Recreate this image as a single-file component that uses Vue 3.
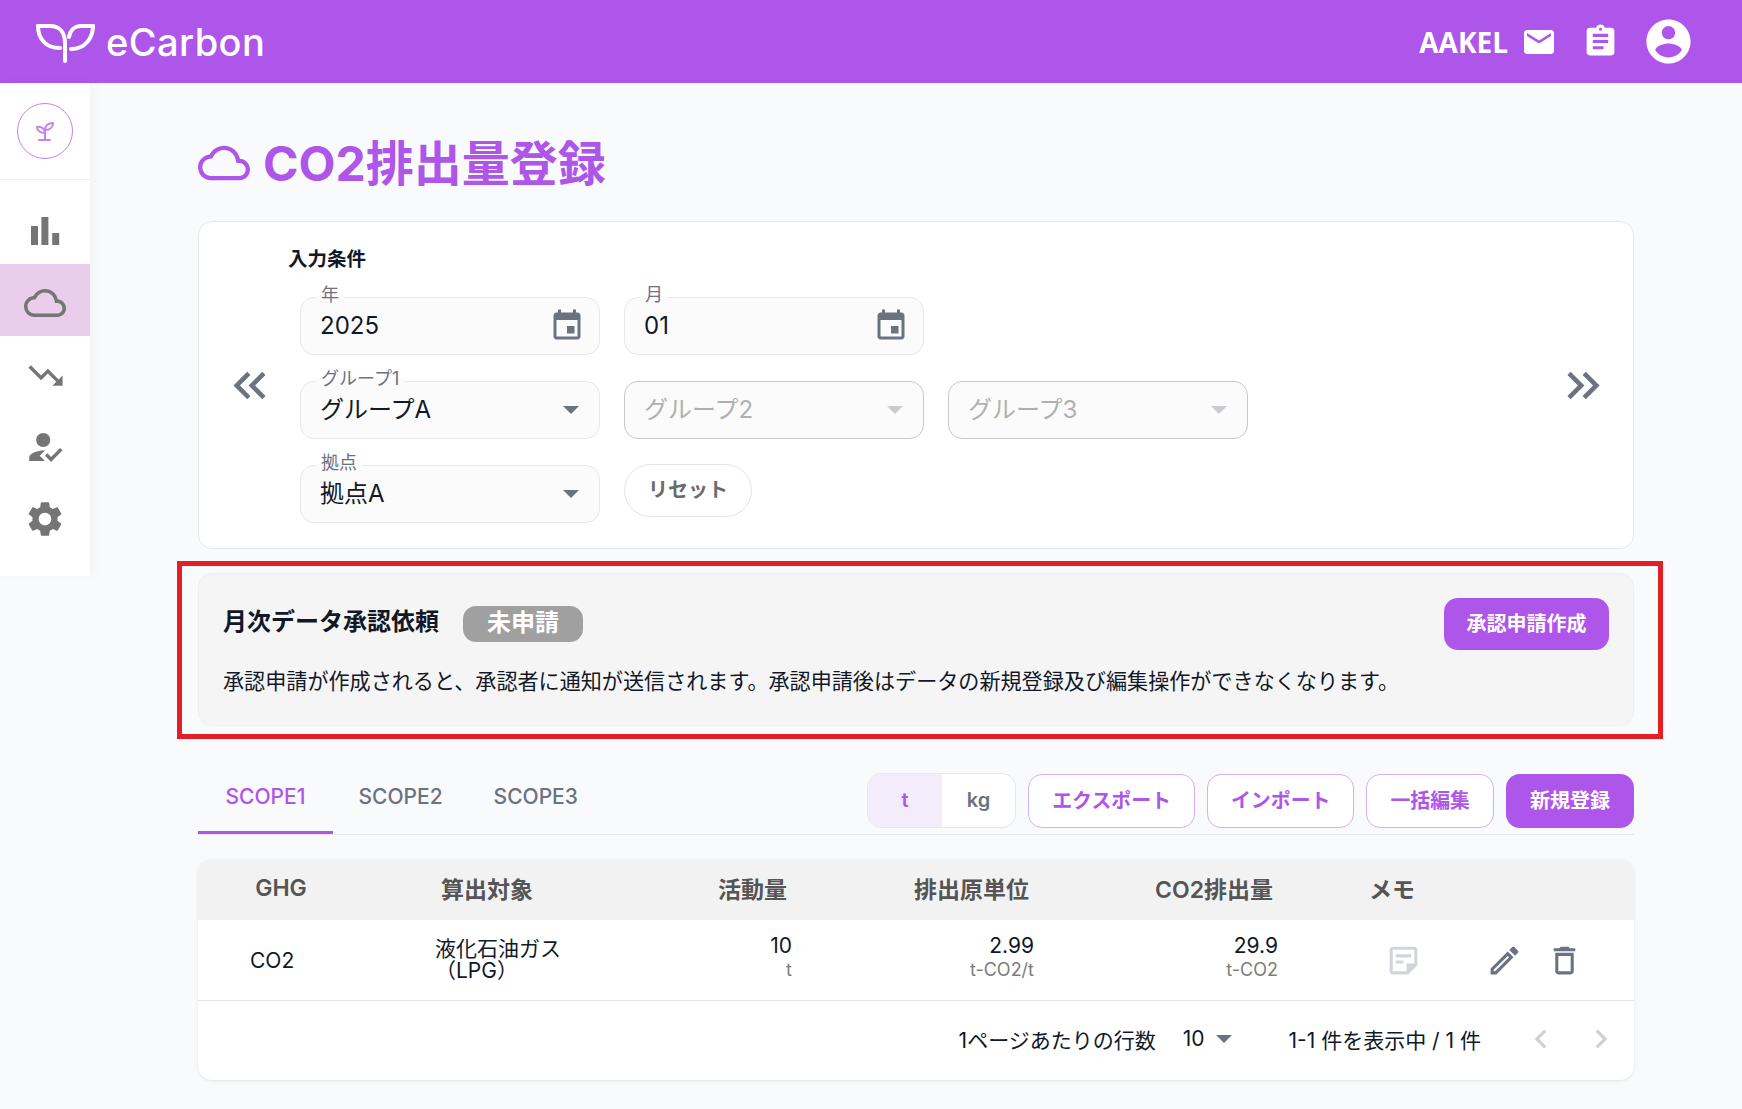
<template>
  <div class="page">
    <header class="topbar">
      <div class="brand">
        <svg class="brand-mark" viewBox="0 0 61 40" fill="none" stroke="#fff" stroke-width="4" stroke-linecap="round" stroke-linejoin="round">
          <path d="M3 3H15C25 3 30 10 30 20V38" />
          <path d="M3 3C3 15 10 25 25 25" />
          <path d="M58 3H46C39 3 35 8 34 14" />
          <path d="M58 3C58 15 50 26 36 26" />
        </svg>
        <span class="brand-name">eCarbon</span>
      </div>
      <div class="top-right">
        <span class="user">AAKEL</span>
        <svg class="ic-mail" viewBox="0 0 24 24"><path :d="icons.mail" /></svg>
        <svg class="ic-clip" viewBox="0 0 24 24"><path :d="icons.assignment" /></svg>
        <svg class="ic-account" viewBox="0 0 24 24"><path :d="icons.account" /></svg>
      </div>
    </header>

    <div class="body">
      <aside class="sidebar">
        <div class="side-top">
          <div class="sprout">
            <svg viewBox="0 0 20 20" fill="none" stroke="#c480ec" stroke-width="2" stroke-linecap="round" stroke-linejoin="round">
              <path d="M10 18V9" />
              <path d="M4 19H15" />
              <path d="M10 12C6 12 2 10 2 6C6 5 10 8 10 12Z" />
              <path d="M10 9C10 5 13 2 18 2C18 6 15 9 10 9Z" />
            </svg>
          </div>
        </div>
        <nav class="side-nav">
          <div v-for="item in navItems" :key="item.name" class="nav-item" :class="{ active: item.active }">
            <svg :width="item.size" :height="item.size" viewBox="0 0 24 24"><path :d="item.d" /></svg>
          </div>
        </nav>
      </aside>

      <main class="content">
        <div class="title-row">
          <svg class="title-icon" viewBox="0 0 24 24"><path :d="icons.cloud" /></svg>
          <h1>CO2排出量登録</h1>
        </div>

        <section class="filter-card">
          <svg class="page-arrow" viewBox="0 0 24 24"><path d="M17.59 18L19 16.59 14.42 12 19 7.41 17.59 6l-6 6z" /><path d="M11 18l1.41-1.41L7.83 12l4.58-4.59L11 6l-6 6z" /></svg>
          <div class="filter-body">
            <div class="filter-title">入力条件</div>
            <div class="filter-rows">
              <div class="filter-row">
                <div v-for="f in dateFields" :key="f.label" class="field">
                  <label>{{ f.label }}</label>
                  <span class="val">{{ f.value }}</span>
                  <svg class="cal" viewBox="0 0 24 24"><path :d="icons.event" /></svg>
                </div>
              </div>
              <div class="filter-row">
                <div class="field">
                  <label>グループ1</label>
                  <span class="val">グループA</span>
                  <span class="caret"></span>
                </div>
                <div v-for="g in ['グループ2', 'グループ3']" :key="g" class="field disabled">
                  <span class="val">{{ g }}</span>
                  <span class="caret"></span>
                </div>
              </div>
              <div class="filter-row">
                <div class="field">
                  <label>拠点</label>
                  <span class="val">拠点A</span>
                  <span class="caret"></span>
                </div>
                <button class="reset">リセット</button>
              </div>
            </div>
          </div>
          <svg class="page-arrow" viewBox="0 0 24 24"><path d="M6.41 6L5 7.41 9.58 12 5 16.59 6.41 18l6-6z" /><path d="M13 6l-1.41 1.41L16.17 12l-4.58 4.59L13 18l6-6z" /></svg>
        </section>

        <section class="approval">
          <div class="approval-head">
            <div class="approval-left">
              <h2>月次データ承認依頼</h2>
              <span class="badge">未申請</span>
            </div>
            <button class="btn-primary approve">承認申請作成</button>
          </div>
          <p>承認申請が作成されると、承認者に通知が送信されます。承認申請後はデータの新規登録及び編集操作ができなくなります。</p>
          <div class="highlight"></div>
        </section>

        <div class="tabs-row">
          <div class="tabs">
            <div v-for="(t, i) in tabs" :key="t" class="tab" :class="{ active: i === 0 }">{{ t }}</div>
          </div>
          <div class="actions">
            <div class="unit">
              <span class="on">t</span>
              <span>kg</span>
            </div>
            <button v-for="b in outlineButtons" :key="b" class="btn-outline">{{ b }}</button>
            <button class="btn-primary add">新規登録</button>
          </div>
        </div>

        <section class="table">
          <div class="grid thead">
            <div class="th center">GHG</div>
            <div class="th center">算出対象</div>
            <div class="th right">活動量</div>
            <div class="th right">排出原単位</div>
            <div class="th right">CO2排出量</div>
            <div class="th center">メモ</div>
            <div></div>
          </div>
          <div class="grid trow">
            <div class="td ghg">CO2</div>
            <div class="td target">液化石油ガス<br />（LPG）</div>
            <div v-for="n in amounts" :key="n.unit" class="td amount">
              <span class="amount-val">{{ n.value }}</span>
              <span class="amount-unit">{{ n.unit }}</span>
            </div>
            <div class="td memo">
              <svg viewBox="0 0 24 24"><path :d="icons.note" /></svg>
            </div>
            <div class="td row-actions">
              <svg viewBox="0 0 24 24"><path :d="icons.edit" /></svg>
              <svg viewBox="0 0 24 24"><path :d="icons.trash" /></svg>
            </div>
          </div>
          <div class="tfoot">
            <span>1ページあたりの行数</span>
            <span class="per-page">10</span>
            <span class="caret small"></span>
            <span class="range">1-1 件を表示中 / 1 件</span>
            <svg class="pg first" viewBox="0 0 24 24"><path d="M15.41 7.41L14 6l-6 6 6 6 1.41-1.41L10.83 12z" /></svg>
            <svg class="pg" viewBox="0 0 24 24"><path d="M10 6L8.59 7.41 13.17 12l-4.58 4.59L10 18l6-6z" /></svg>
          </div>
        </section>
      </main>
    </div>
  </div>
</template>

<script setup>
const icons = {
  mail: "M20 4H4c-1.1 0-1.99.9-1.99 2L2 18c0 1.1.9 2 2 2h16c1.1 0 2-.9 2-2V6c0-1.1-.9-2-2-2zm0 4l-8 5-8-5V6l8 5 8-5v2z",
  assignment: "M19 3h-4.18C14.4 1.84 13.3 1 12 1c-1.3 0-2.4.84-2.82 2H5c-1.1 0-2 .9-2 2v14c0 1.1.9 2 2 2h14c1.1 0 2-.9 2-2V5c0-1.1-.9-2-2-2zm-7 0c.55 0 1 .45 1 1s-.45 1-1 1-1-.45-1-1 .45-1 1-1zm2 14H7v-2h7v2zm3-4H7v-2h10v2zm0-4H7V7h10v2z",
  account: "M12 2C6.48 2 2 6.48 2 12s4.48 10 10 10 10-4.48 10-10S17.52 2 12 2zm0 3c1.66 0 3 1.34 3 3s-1.34 3-3 3-3-1.34-3-3 1.34-3 3-3zm0 14.2c-2.5 0-4.71-1.28-6-3.22.03-1.99 4-3.08 6-3.08 1.99 0 5.97 1.09 6 3.08-1.29 1.94-3.5 3.22-6 3.22z",
  cloud: "M19.35 10.04C18.67 6.59 15.64 4 12 4 9.11 4 6.6 5.64 5.35 8.04 2.34 8.36 0 10.91 0 14c0 3.31 2.69 6 6 6h13c2.76 0 5-2.24 5-5 0-2.64-2.05-4.78-4.65-4.96zM19 18H6c-2.21 0-4-1.79-4-4 0-2.05 1.53-3.76 3.56-3.97l1.07-.11.5-.95C8.08 7.14 9.94 6 12 6c2.62 0 4.88 1.86 5.39 4.43l.3 1.5 1.53.11c1.56.1 2.78 1.41 2.78 2.96 0 1.65-1.35 3-3 3z",
  event: "M17 12h-5v5h5v-5zM16 1v2H8V1H6v2H5c-1.11 0-1.99.9-1.99 2L3 19c0 1.1.89 2 2 2h14c1.1 0 2-.9 2-2V5c0-1.1-.9-2-2-2h-1V1h-2zm3 18H5V8h14v11z",
  note: "M19 5v9h-5v5H5V5h14m0-2H5c-1.1 0-2 .9-2 2v14c0 1.1.9 2 2 2h10l6-6V5c0-1.1-.9-2-2-2zm-7 11H7v-2h5v2zm5-4H7V8h10v2z",
  edit: "M14.06 9.02l.92.92L5.92 19H5v-.92l9.06-9.06M17.66 3c-.25 0-.51.1-.7.29l-1.83 1.83 3.75 3.75 1.83-1.83c.39-.39.39-1.02 0-1.41l-2.34-2.34c-.2-.2-.45-.29-.71-.29zm-3.6 3.19L3 17.25V21h3.75L17.81 9.94l-3.75-3.75z",
  trash: "M6 19c0 1.1.9 2 2 2h8c1.1 0 2-.9 2-2V7H6v12zM8 9h8v10H8V9zm7.5-5l-1-1h-5l-1 1H5v2h14V4h-3.5z",
};

const navItems = [
  { name: "chart", size: 48, d: "M5 9.5h3.5V19H5zM10.2 5h3.5v14h-3.5zM15.6 13h3.5v6h-3.5z" },
  { name: "cloud", size: 42, d: icons.cloud, active: true },
  { name: "trend", size: 41, d: "M16 18l2.29-2.29-4.88-4.88-4 4L2 7.41 3.41 6l6 6 4-4 6.3 6.29L22 12v6z" },
  { name: "approve", size: 42, d: "M9 17l3-2.94c-.39-.04-.68-.06-1-.06-2.67 0-8 1.34-8 4v2h9l-3-3zm2-5c2.21 0 4-1.79 4-4s-1.79-4-4-4-4 1.79-4 4 1.79 4 4 4M15.47 20.5L12 17l1.4-1.41 2.07 2.08 5.13-5.17 1.4 1.41z" },
  { name: "settings", size: 42, d: "M19.14 12.94c.04-.3.06-.61.06-.94 0-.32-.02-.64-.07-.94l2.03-1.58c.18-.14.23-.41.12-.61l-1.92-3.32c-.12-.22-.37-.29-.59-.22l-2.39.96c-.5-.38-1.03-.7-1.62-.94l-.36-2.54c-.04-.24-.24-.41-.48-.41h-3.84c-.24 0-.43.17-.47.41l-.36 2.54c-.59.24-1.13.57-1.62.94l-2.39-.96c-.22-.08-.47 0-.59.22L2.74 8.87c-.12.21-.08.47.12.61l2.03 1.58c-.05.3-.09.63-.09.94s.02.64.07.94l-2.03 1.58c-.18.14-.23.41-.12.61l1.92 3.32c.12.22.37.29.59.22l2.39-.96c.5.38 1.03.7 1.62.94l.36 2.54c.05.24.24.41.48.41h3.84c.24 0 .44-.17.47-.41l.36-2.54c.59-.24 1.13-.56 1.62-.94l2.39.96c.22.08.47 0 .59-.22l1.92-3.32c.12-.22.07-.47-.12-.61l-2.01-1.58zM12 15.6c-1.98 0-3.6-1.62-3.6-3.6s1.62-3.6 3.6-3.6 3.6 1.62 3.6 3.6-1.62 3.6-3.6 3.6z" },
];

const dateFields = [
  { label: "年", value: "2025" },
  { label: "月", value: "01" },
];
const tabs = ["SCOPE1", "SCOPE2", "SCOPE3"];
const outlineButtons = ["エクスポート", "インポート", "一括編集"];
const amounts = [
  { value: "10", unit: "t" },
  { value: "2.99", unit: "t-CO2/t" },
  { value: "29.9", unit: "t-CO2" },
];
</script>

<style>
html,
body {
  background: #f9fafb;
}
</style>

<style scoped>
.page {
  min-height: 1109px;
  background: #f9fafb;
  font-family: Inter, "Noto Sans CJK JP", sans-serif;
  color: #111827;
}
button {
  font-family: inherit;
  cursor: pointer;
}

/* header */
.topbar {
  height: 83px;
  background: #ae56ea;
  display: flex;
  align-items: center;
  justify-content: space-between;
  padding: 0 47px 0 35px;
}
.brand {
  display: flex;
  align-items: center;
  gap: 10px;
}
.brand-mark {
  width: 61px;
  height: 40px;
  margin-top: 2px;
}
.brand-name {
  color: #fff;
  font-size: 38px;
  font-weight: 500;
  line-height: 40px;
  letter-spacing: 0.4px;
  margin-top: 1px;
}
.top-right {
  display: flex;
  align-items: center;
  fill: #fff;
}
.user {
  color: #fff;
  font-family: "Open Sans", sans-serif;
  font-weight: 700;
  font-size: 28px;
  margin-right: 13px;
}
.ic-mail {
  width: 36px;
  height: 36px;
}
.ic-clip {
  width: 37px;
  height: 37px;
  margin-left: 25px;
}
.ic-account {
  width: 53px;
  height: 53px;
  margin-left: 23px;
}

/* sidebar */
.body {
  display: flex;
  align-items: flex-start;
}
.sidebar {
  width: 90px;
  height: 493px;
  flex-shrink: 0;
  background: #fff;
  box-shadow: 4px 0 10px rgba(0, 0, 0, 0.03);
}
.side-top {
  height: 97px;
  border-bottom: 1px solid #eeeeee;
  padding-top: 20px;
  box-sizing: border-box;
}
.sprout {
  width: 56px;
  height: 56px;
  margin: 0 auto;
  border: 1px solid #c480ec;
  border-radius: 50%;
  box-sizing: border-box;
  display: flex;
  align-items: center;
  justify-content: center;
}
.sprout svg {
  width: 20px;
  height: 20px;
}
.side-nav {
  margin-top: 12px;
}
.nav-item {
  height: 72px;
  padding-top: 6px;
  box-sizing: border-box;
  display: flex;
  align-items: center;
  justify-content: center;
  fill: #757575;
}
.nav-item.active {
  background: #e9cdea;
}

/* main */
.content {
  flex: 1;
  padding: 52px 108px 0;
  min-width: 0;
}
.title-row {
  display: flex;
  align-items: center;
  height: 56px;
  gap: 13px;
  fill: #ae56ea;
}
.title-icon {
  width: 52px;
  height: 52px;
}
h1 {
  margin: 2px 0 0;
  font-size: 48px;
  font-weight: 700;
  line-height: 56px;
  color: #ae56ea;
}

.filter-card {
  margin-top: 30px;
  height: 328px;
  box-sizing: border-box;
  background: #fff;
  border: 1px solid #e5e7eb;
  border-radius: 14px;
  display: flex;
  align-items: center;
  padding: 0 22px 0 23px;
}
.page-arrow {
  width: 55px;
  height: 55px;
  flex-shrink: 0;
  fill: #6b7280;
}
.filter-body {
  flex: 1;
  margin-left: 11px;
  align-self: stretch;
  padding-top: 23px;
}
.filter-title {
  font-size: 19.5px;
  font-weight: 700;
  line-height: 28px;
}
.filter-rows {
  margin: 24px 0 0 12px;
  display: flex;
  flex-direction: column;
  gap: 26px;
}
.filter-row {
  display: flex;
  gap: 24px;
  align-items: flex-start;
}
.field {
  position: relative;
  width: 300px;
  height: 58px;
  box-sizing: border-box;
  background: #fbfbfb;
  border: 1px solid #e8e8e8;
  border-radius: 14px;
  display: flex;
  align-items: center;
  justify-content: space-between;
  padding: 0 16px 0 19px;
}
.field label {
  position: absolute;
  left: 15px;
  top: -14px;
  padding: 0 5px;
  font-size: 18px;
  line-height: 22px;
  color: #6b7280;
  background: linear-gradient(#fff 50%, #fbfbfb 50%);
}
.val {
  font-size: 24px;
  line-height: 32px;
}
.cal {
  width: 36px;
  height: 36px;
  margin-right: -2px;
  fill: #6b7280;
}
.caret {
  width: 0;
  height: 0;
  border-left: 8.5px solid transparent;
  border-right: 8.5px solid transparent;
  border-top: 8px solid #6b7280;
  margin-right: 4px;
}
.field.disabled {
  border-color: #c9c9c9;
}
.field.disabled .val {
  color: #b0b0b0;
}
.field.disabled .caret {
  border-top-color: #c9cbd0;
}
.reset {
  width: 128px;
  height: 53px;
  margin-top: -1px;
  border: 1px solid #e3e3e3;
  border-radius: 27px;
  background: #fff;
  color: #6b6b6b;
  font-size: 20px;
  font-weight: 700;
  padding: 0 0 4px;
}

/* approval */
.approval {
  position: relative;
  margin-top: 24px;
  height: 153px;
  box-sizing: border-box;
  background: #f5f5f5;
  border: 1px solid #efefef;
  border-radius: 14px;
  padding: 24px 24px 0;
}
.approval-head {
  display: flex;
  align-items: center;
  justify-content: space-between;
  height: 52px;
}
.approval-left {
  display: flex;
  align-items: center;
  gap: 24px;
}
h2 {
  margin: 0 0 4px;
  font-size: 24px;
  font-weight: 700;
  line-height: 36px;
}
.badge {
  width: 120px;
  height: 36px;
  border-radius: 13px;
  background: #a0a0a0;
  color: #fff;
  font-size: 24px;
  font-weight: 700;
  line-height: 34px;
  text-align: center;
}
.btn-primary {
  border: none;
  background: #ae56ea;
  color: #fff;
  font-size: 20px;
  font-weight: 700;
  border-radius: 14px;
  padding: 0 0 4px;
}
.approve {
  width: 165px;
  height: 52px;
}
.approval p {
  margin: 17px 0 0;
  font-size: 21.1px;
  line-height: 30px;
}
.highlight {
  position: absolute;
  top: -13px;
  left: -22px;
  right: -30px;
  bottom: -14px;
  border: 5px solid #e31e25;
  pointer-events: none;
}

/* tabs */
.tabs-row {
  margin-top: 47px;
  height: 62px;
  box-sizing: border-box;
  border-bottom: 1px solid #e5e7eb;
  display: flex;
  justify-content: space-between;
  align-items: flex-start;
}
.tabs {
  display: flex;
}
.tab {
  height: 61px;
  box-sizing: border-box;
  padding: 10px 25.5px 0;
  font-size: 21px;
  font-weight: 500;
  line-height: 28px;
  color: #6b7280;
}
.tab.active {
  padding: 10px 27.5px 0;
  color: #ae56ea;
  border-bottom: 3px solid #ae56ea;
}
.actions {
  display: flex;
  gap: 12px;
  padding-top: 1px;
}
.unit {
  display: flex;
  width: 149px;
  height: 55px;
  margin-top: -1px;
  box-sizing: border-box;
  border: 1px solid #e5e7eb;
  border-radius: 14px;
  overflow: hidden;
  background: #fff;
}
.unit span {
  flex: 1;
  display: flex;
  align-items: center;
  justify-content: center;
  padding-bottom: 2px;
  font-size: 20px;
  font-weight: 600;
  color: #6b7280;
}
.unit .on {
  background: #f3ecfa;
  color: #ae56ea;
}
.btn-outline {
  height: 54px;
  padding: 0 23px 4px;
  box-sizing: border-box;
  background: #fff;
  border: 1px solid #d6b0f2;
  border-radius: 14px;
  color: #ae56ea;
  font-size: 19.9px;
  font-weight: 700;
}
.add {
  width: 128px;
  height: 54px;
}

/* table */
.table {
  margin-top: 24px;
  background: #fff;
  border-radius: 14px;
  overflow: hidden;
  box-shadow: 0 1px 3px rgba(0, 0, 0, 0.1);
}
.grid {
  display: grid;
  grid-template-columns: 166px 246px 202px 242px 244px 188px 148px;
  align-items: center;
}
.thead {
  height: 61px;
  padding-bottom: 4px;
  box-sizing: border-box;
  background: #f2f2f2;
}
.th {
  font-size: 23px;
  font-weight: 600;
  color: #555555;
}
.th.center {
  text-align: center;
}
.th.right {
  text-align: right;
  padding-right: 25px;
}
.trow {
  height: 81px;
  border-bottom: 1px solid #e5e7eb;
  box-sizing: border-box;
}
.td {
  font-size: 21px;
}
.ghg {
  padding-left: 52px;
}
.target {
  padding-left: 71px;
  line-height: 22px;
}
.amount {
  display: flex;
  flex-direction: column;
  align-items: flex-end;
  padding-right: 20px;
  margin-bottom: 6px;
}
.amount-val {
  line-height: 26px;
}
.amount-unit {
  font-size: 18px;
  line-height: 22px;
  color: #7c7c7c;
}
.memo {
  padding-left: 87px;
  display: flex;
  fill: #d1d5db;
}
.memo svg,
.row-actions svg {
  width: 37px;
  height: 37px;
}
.row-actions {
  display: flex;
  gap: 22px;
  fill: #6b7280;
}
.row-actions svg:last-child {
  margin-left: 1px;
}
.tfoot {
  height: 79px;
  display: flex;
  align-items: center;
  justify-content: flex-end;
  padding: 0 14px 4px 0;
  box-sizing: border-box;
  font-size: 21px;
}
.per-page {
  margin-left: 27px;
}
.caret.small {
  margin: 0 0 0 11px;
}
.range {
  margin-left: 57px;
}
.pg {
  width: 38px;
  height: 38px;
  margin-left: 22px;
  fill: #cfd1d5;
}
.pg.first {
  margin-left: 41px;
}
</style>
